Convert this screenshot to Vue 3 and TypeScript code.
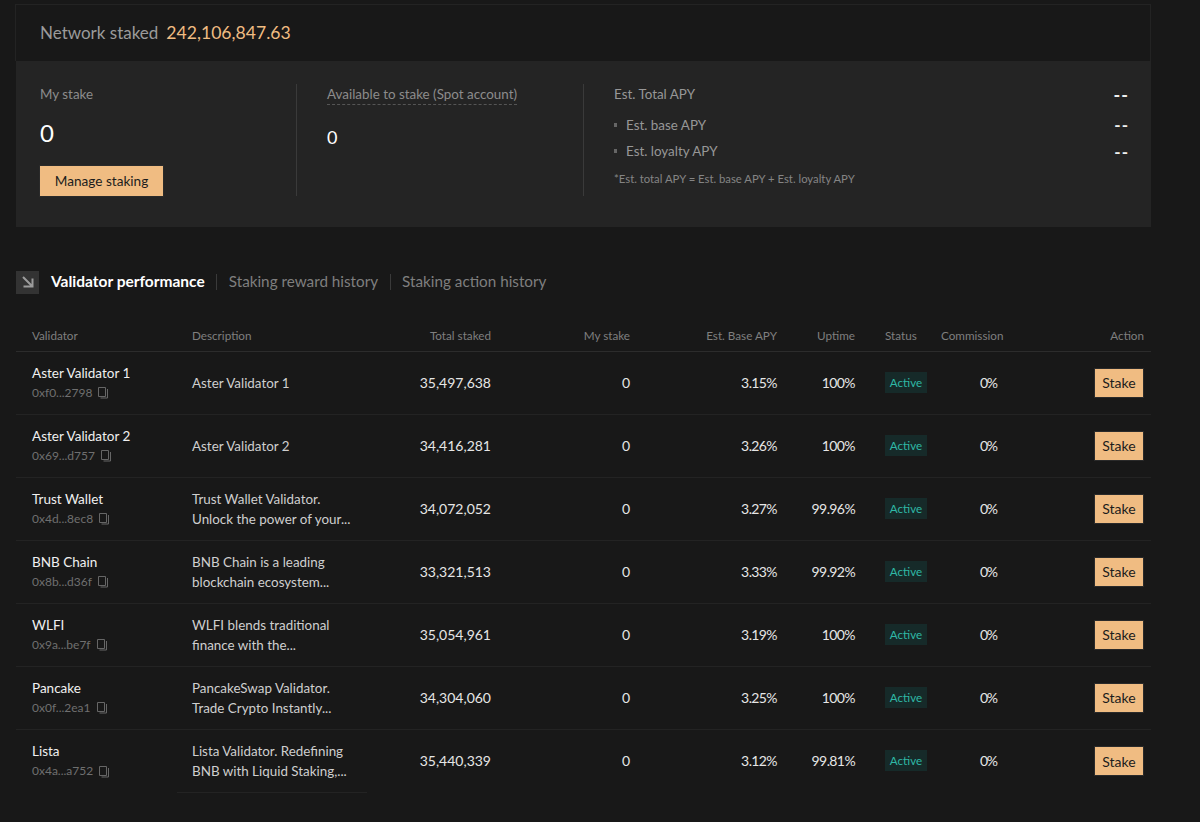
<script setup lang="ts">
interface Row { name: string; addr: string; desc: string[]; total: string; apy: string; up: string }
const rows: Row[] = [
  { name: 'Aster Validator 1', addr: '0xf0...2798', desc: ['Aster Validator 1'], total: '35,497,638', apy: '3.15%', up: '100%' },
  { name: 'Aster Validator 2', addr: '0x69...d757', desc: ['Aster Validator 2'], total: '34,416,281', apy: '3.26%', up: '100%' },
  { name: 'Trust Wallet', addr: '0x4d...8ec8', desc: ['Trust Wallet Validator.', 'Unlock the power of your...'], total: '34,072,052', apy: '3.27%', up: '99.96%' },
  { name: 'BNB Chain', addr: '0x8b...d36f', desc: ['BNB Chain is a leading', 'blockchain ecosystem...'], total: '33,321,513', apy: '3.33%', up: '99.92%' },
  { name: 'WLFI', addr: '0x9a...be7f', desc: ['WLFI blends traditional', 'finance with the...'], total: '35,054,961', apy: '3.19%', up: '100%' },
  { name: 'Pancake', addr: '0x0f...2ea1', desc: ['PancakeSwap Validator.', 'Trade Crypto Instantly...'], total: '34,304,060', apy: '3.25%', up: '100%' },
  { name: 'Lista', addr: '0x4a...a752', desc: ['Lista Validator. Redefining', 'BNB with Liquid Staking,...'], total: '35,440,339', apy: '3.12%', up: '99.81%' },
]
</script>

<template>
  <div class="page">
    <section class="summary">
      <header class="net"><span class="net-label">Network staked</span><span class="net-val">242,106,847.63</span></header>
      <div class="card">
        <div class="col c1">
          <div class="lbl">My stake</div>
          <div class="big">0</div>
          <button class="btn manage">Manage staking</button>
        </div>
        <div class="col c2">
          <div class="lbl"><span class="dashed">Available to stake (Spot account)</span></div>
          <div class="mid">0</div>
        </div>
        <div class="col c3">
          <div class="apy-row"><span class="lbl">Est. Total APY</span><span class="dash first">--</span></div>
          <div class="apy-row sub"><span class="lbl"><i class="sq"></i>Est. base APY</span><span class="dash">--</span></div>
          <div class="apy-row sub2"><span class="lbl"><i class="sq"></i>Est. loyalty APY</span><span class="dash low">--</span></div>
          <div class="note">*Est. total APY = Est. base APY + Est. loyalty APY</div>
        </div>
      </div>
    </section>

    <nav class="tabs">
      <span class="collapse">
        <svg width="12" height="12" viewBox="0 0 12 12" fill="none" stroke="#9c9c9c" stroke-width="2"><path d="M1 1 10 10M10.5 2.5v8H1.5"/></svg>
      </span>
      <span class="tab on">Validator performance</span>
      <span class="sep"></span>
      <span class="tab">Staking reward history</span>
      <span class="sep"></span>
      <span class="tab">Staking action history</span>
    </nav>

    <div class="table">
      <div class="row head">
        <div class="v">Validator</div>
        <div class="d">Description</div>
        <div class="r">Total staked</div>
        <div class="r">My stake</div>
        <div class="r">Est. Base APY</div>
        <div class="r">Uptime</div>
        <div class="s">Status</div>
        <div class="c">Commission</div>
        <div class="r a">Action</div>
      </div>
      <div v-for="x in rows" :key="x.addr" class="row body">
        <div class="v">
          <div class="name">{{ x.name }}</div>
          <div class="addr">{{ x.addr }}
            <svg class="copy" width="12" height="13" viewBox="0 0 12 13" fill="none" stroke="#666" stroke-width="1"><path d="M1.5 1.5h7v9h-7zM10.5 3v9h-7"/></svg>
          </div>
        </div>
        <div class="d"><div v-for="l in x.desc" :key="l">{{ l }}</div></div>
        <div class="r">{{ x.total }}</div>
        <div class="r">0</div>
        <div class="r tight">{{ x.apy }}</div>
        <div class="r tight">{{ x.up }}</div>
        <div class="s"><span class="badge">Active</span></div>
        <div class="c pct">0%</div>
        <div class="r a act"><button class="btn stake">Stake</button></div>
      </div>
    </div>
  </div>
</template>

<style>
html, body { margin: 0; background: #1c1c1c; }
</style>

<style scoped>
.page { width: 1200px; height: 822px; overflow: hidden; background: #181818; font-family: "Lato", "Noto Sans", sans-serif; color: #eaeaea; box-sizing: border-box; padding-top: 4px; }
.summary { margin-left: 16px; width: 1135px; }
.net { height: 57px; box-sizing: border-box; display: flex; align-items: center; padding: 0 24px; gap: 8px; border: 1px solid #232323; border-bottom: 0; margin-left: -1px; font-size: 17px; background: #181818; padding-bottom: 1px; }
.net-label { color: #9b9b9b; }
.net-val { color: #f0bc82; font-size: 17.6px; }
.card { height: 166px; box-sizing: border-box; background: #242424; display: flex; padding: 23px 22px 31px 24px; }
.col { height: 112px; }
.c1 { width: 256px; border-right: 1px solid #3a3a3a; }
.c2 { width: 256px; padding-left: 30px; border-right: 1px solid #3a3a3a; }
.c3 { flex: 1; padding-left: 30px; }
.lbl { color: #8c8c8c; font-size: 13.4px; line-height: 20px; }
.c3 .lbl { color: #979797; }
.dashed { border-bottom: 1px dashed #555; display: inline-block; line-height: 19px; }
.big { font-size: 24px; line-height: 28px; color: #fff; margin-top: 15px; }
.mid { font-size: 18px; line-height: 24px; color: #fff; margin-top: 20px; }
.btn { border: 1px solid #2a2a2a; background: #f0bc82; color: #1c1c1c; font: inherit; padding: 0; cursor: pointer; display: inline-flex; align-items: center; justify-content: center; }
.manage { width: 125px; height: 32px; font-size: 13.6px; margin: 18px 0 0 -1px; }
.apy-row { display: flex; justify-content: space-between; align-items: center; height: 20px; }
.apy-row.sub { margin-top: 11px; }
.apy-row.sub2 { margin-top: 6px; }
.sub .lbl, .sub2 .lbl { display: flex; align-items: center; }
.sq { width: 3px; height: 4px; background: #666; margin-right: 9px; display: inline-block; }
.dash { color: #eee; font-size: 17px; font-weight: 700; letter-spacing: 1px; line-height: 20px; }
.dash.first { font-size: 18px; padding-top: 2px; }
.dash.low { padding-top: 2px; }
.note { font-size: 11.3px; color: #848484; margin-top: 10px; line-height: 16px; }
.tabs { margin: 43px 0 0 16px; height: 24px; display: flex; align-items: center; }
.collapse { width: 23px; height: 23px; background: #333; display: flex; align-items: center; justify-content: center; margin-right: 12px; }
.tab { font-size: 15.25px; color: #7f7f7f; margin-bottom: 2px; }
.tab.on { color: #fff; font-weight: 700; font-size: 15.5px; }
.sep { width: 1px; height: 16px; background: #3a3a3a; margin: 0 11.5px; }
.table { margin: 29px 0 0 16px; width: 1135px; }
.row { display: grid; grid-template-columns: 161px 190px 131px 139px 147px 78px 72px 76px 141px; align-items: center; }
.head { height: 28px; border-bottom: 1px solid #2c2c2c; color: #7f7f7f; font-size: 11.7px; }
.head > div { margin-bottom: 5px; }
.body { height: 63px; box-sizing: border-box; padding-bottom: 2px; border-bottom: 1px solid #232323; font-size: 14px; color: #e6e6e6; }
.body:last-child { border-bottom: 0; padding-bottom: 0; }
.body:last-child > div { margin-bottom: 2px; }
.body:last-child > .d { margin-bottom: 0; padding-top: 0; padding-bottom: 1px; align-self: stretch; border-bottom: 1px solid #232323; display: flex; flex-direction: column; justify-content: center; }
.v { padding-left: 16px; }
.d { padding-left: 15px; }
.body .d { line-height: 20px; color: #cfcfcf; font-size: 13.4px; padding-top: 2px; }
.r { text-align: right; padding-right: 7px; }
.tight { letter-spacing: -0.6px; }
.s { padding-left: 23px; }
.c { padding-left: 7px; }
.pct { padding-left: 46px; letter-spacing: -1.4px; }
.a { padding-right: 7px; }
.act { margin-top: 1px; display: flex; justify-content: flex-end; }
.name { font-size: 13.5px; line-height: 20px; color: #f0f0f0; }
.addr { font-size: 12px; color: #6f6f6f; line-height: 18px; margin-top: 1px; display: flex; align-items: center; gap: 5px; }
.badge { display: inline-block; width: 42px; height: 21px; line-height: 21px; text-align: center; background: #162a29; color: #2fb8a6; font-size: 11.6px; }
.stake { width: 50px; height: 30px; font-size: 14px; }
</style>
